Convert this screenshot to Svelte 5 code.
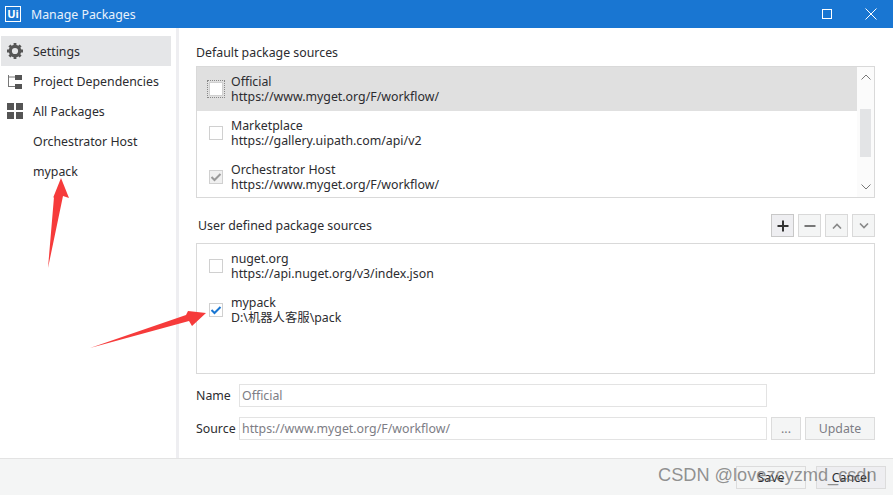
<script>
  const navItems = [
    { label: "Settings", icon: "gear", active: true },
    { label: "Project Dependencies", icon: "tree" },
    { label: "All Packages", icon: "grid" },
    { label: "Orchestrator Host" },
    { label: "mypack" }
  ];

  const defaultSources = [
    { name: "Official", url: "https://www.myget.org/F/workflow/", state: "focus", selected: true },
    { name: "Marketplace", url: "https://gallery.uipath.com/api/v2", state: "off" },
    { name: "Orchestrator Host", url: "https://www.myget.org/F/workflow/", state: "disabled" }
  ];

  const userSources = [
    { name: "nuget.org", url: "https://api.nuget.org/v3/index.json", state: "off" },
    { name: "mypack", url: "D:\\机器人客服\\pack", state: "on" }
  ];
</script>

{#snippet sourceRow(item)}
  <div class="source" class:selected={item.selected}>
    <span class="boxWrap" class:focus={item.state === "focus"}>
      <span class="box" class:on={item.state === "on"} class:disabled={item.state === "disabled"}>
        {#if item.state === "on" || item.state === "disabled"}
          <svg width="12" height="10" viewBox="0 0 12 10"><path d="M1.5 5 L4.5 8 L10.5 2" fill="none" stroke="currentColor" stroke-width="2" /></svg>
        {/if}
      </span>
    </span>
    <div class="sourceText">
      <div>{item.name}</div>
      <div>{item.url}</div>
    </div>
  </div>
{/snippet}

<div class="window">
  <header class="titleBar">
    <div class="logo">Ui</div>
    <span class="title">Manage Packages</span>
    <div class="winButtons">
      <svg width="12" height="12" viewBox="0 0 12 12"><rect x="1.5" y="1.5" width="9" height="9" fill="none" stroke="white" stroke-width="1" /></svg>
      <svg width="12" height="12" viewBox="0 0 12 12"><path d="M0.5 0.5 L11.5 11.5 M11.5 0.5 L0.5 11.5" stroke="white" stroke-width="1" /></svg>
    </div>
  </header>

  <div class="body">
    <nav class="sidebar">
      {#each navItems as item}
        <div class="navItem" class:active={item.active}>
          <span class="navIcon">
            {#if item.icon === "gear"}
              <svg width="16" height="16" viewBox="0 0 16 16">
                <circle cx="8" cy="8" r="4.7" fill="none" stroke="#555" stroke-width="3.2" />
                <path d="M8 0 V3 M8 13 V16 M0 8 H3 M13 8 H16 M2.4 2.4 L4.5 4.5 M11.5 11.5 L13.6 13.6 M13.6 2.4 L11.5 4.5 M4.5 11.5 L2.4 13.6" stroke="#555" stroke-width="2.8" />
              </svg>
            {:else if item.icon === "tree"}
              <svg width="16" height="16" viewBox="0 0 16 16">
                <path d="M1.5 2 V14 M1.5 4 H8 M1.5 13.5 H8" fill="none" stroke="#777" stroke-width="1" />
                <rect x="8" y="2" width="7" height="5" fill="#555" />
                <rect x="8" y="11" width="7" height="5" fill="#555" />
              </svg>
            {:else if item.icon === "grid"}
              <svg width="16" height="16" viewBox="0 0 16 16" fill="#555">
                <rect x="0" y="0" width="7" height="7" />
                <rect x="9" y="0" width="7" height="7" />
                <rect x="0" y="9" width="7" height="7" />
                <rect x="9" y="9" width="7" height="7" />
              </svg>
            {/if}
          </span>
          <span>{item.label}</span>
        </div>
      {/each}
    </nav>

    <main class="content">
      <div class="sectionLabel first">Default package sources</div>
      <div class="listBox defaults">
        <div class="rows">
          {#each defaultSources as item}
            {@render sourceRow(item)}
          {/each}
        </div>
        <div class="scrollBar">
          <svg width="10" height="6" viewBox="0 0 10 6"><path d="M0.5 5.5 L5 1 L9.5 5.5" fill="none" stroke="#777" /></svg>
          <div class="track"><div class="thumb"></div></div>
          <svg width="10" height="6" viewBox="0 0 10 6"><path d="M0.5 0.5 L5 5 L9.5 0.5" fill="none" stroke="#777" /></svg>
        </div>
      </div>

      <div class="userHeader">
        <div class="sectionLabel">User defined package sources</div>
        <div class="tools">
          <button class="tool hot" aria-label="Add">
            <svg width="12" height="12" viewBox="0 0 12 12"><path d="M6 0.5 V11.5 M0.5 6 H11.5" stroke="#333" stroke-width="2" /></svg>
          </button>
          <button class="tool" aria-label="Remove">
            <svg width="12" height="12" viewBox="0 0 12 12"><path d="M0.5 6 H11.5" stroke="#777" stroke-width="2" /></svg>
          </button>
          <button class="tool" aria-label="Up">
            <svg width="10" height="6" viewBox="0 0 10 6"><path d="M1 5.5 L5 1.5 L9 5.5" fill="none" stroke="#888" stroke-width="1.6" /></svg>
          </button>
          <button class="tool" aria-label="Down">
            <svg width="10" height="6" viewBox="0 0 10 6"><path d="M1 0.5 L5 4.5 L9 0.5" fill="none" stroke="#888" stroke-width="1.6" /></svg>
          </button>
        </div>
      </div>
      <div class="listBox users">
        <div class="rows">
          {#each userSources as item}
            {@render sourceRow(item)}
          {/each}
        </div>
      </div>

      <div class="formRow name">
        <span class="formLabel">Name</span>
        <div class="input">Official</div>
      </div>
      <div class="formRow">
        <span class="formLabel">Source</span>
        <div class="input">https://www.myget.org/F/workflow/</div>
        <button class="btn dots">...</button>
        <button class="btn update">Update</button>
      </div>
    </main>
  </div>

  <footer class="footer">
    <button class="btn footBtn">Save</button>
    <button class="btn footBtn cancel">Cancel</button>
  </footer>

  <svg class="arrows" width="893" height="495" viewBox="0 0 893 495">
    <polygon points="61,178 69,198 63,196 48,268 54,197 53,198" fill="#f63b3b" />
    <polygon points="206,313 192,326 189,321 90,348 186,315 188,311" fill="#f63b3b" />
  </svg>
  <div class="watermark">CSDN @lovezcyzmd_csdn</div>
</div>

<style>
  :global(body) {
    margin: 0;
    background: white;
  }

  .window {
    position: relative;
    display: flex;
    flex-direction: column;
    width: 893px;
    height: 495px;
    overflow: hidden;
    font-family: "Noto Sans", "Noto Sans CJK SC", sans-serif;
    font-size: 12.35px;
    color: #2c2c30;
    background: white;
  }

  .titleBar {
    display: flex;
    align-items: center;
    height: 28px;
    padding: 0 0 0 5px;
    background: #1976d2;
    color: white;
    flex-shrink: 0;
  }

  .logo {
    width: 14px;
    height: 14px;
    border: 1px solid white;
    font-size: 11px;
    font-weight: 700;
    line-height: 14px;
    text-align: center;
  }

  .title {
    margin-left: 10px;
    color: #e8f1fb;
  }

  .winButtons {
    display: flex;
    align-items: center;
    gap: 32px;
    margin-left: auto;
    margin-right: 16px;
  }

  .body {
    display: flex;
    flex: 1;
    min-height: 0;
  }

  .sidebar {
    width: 179px;
    box-sizing: border-box;
    padding: 8px 5px 0 1px;
    border-right: 3px solid #eeeef1;
    flex-shrink: 0;
  }

  .navItem {
    display: flex;
    align-items: center;
    height: 30px;
    width: 170px;
  }

  .navItem.active {
    background: #e5e6e8;
  }

  .navIcon {
    display: flex;
    align-items: center;
    justify-content: center;
    width: 16px;
    margin: 0 10px 0 6px;
  }

  .content {
    flex: 1;
    display: flex;
    flex-direction: column;
    padding: 0 18px 0 17px;
  }

  .sectionLabel {
    line-height: 17px;
  }

  .sectionLabel.first {
    margin-top: 16px;
    margin-bottom: 5px;
  }

  .listBox {
    display: flex;
    border: 1px solid #d9d9d9;
    box-sizing: border-box;
  }

  .defaults {
    height: 132px;
    overflow: hidden;
  }

  .users {
    height: 131px;
  }

  .rows {
    flex: 1;
  }

  .source {
    display: flex;
    align-items: center;
    height: 44px;
  }

  .source.selected {
    background: #e0e0e0;
  }

  .boxWrap {
    display: flex;
    align-items: center;
    justify-content: center;
    width: 16px;
    height: 16px;
    margin-left: 10px;
    margin-right: 6px;
    border: 1px solid transparent;
  }

  .boxWrap.focus {
    border: 1px dotted #888;
  }

  .box {
    display: flex;
    align-items: center;
    justify-content: center;
    width: 12px;
    height: 12px;
    border: 1px solid #d0d0d0;
    background: white;
    color: #1976d2;
    flex-shrink: 0;
  }

  .box.disabled {
    background: #f0f0f0;
    color: #9a9a9a;
  }

  .sourceText {
    line-height: 15px;
  }

  .scrollBar {
    display: flex;
    flex-direction: column;
    align-items: center;
    justify-content: space-between;
    width: 17px;
    padding: 7px 0;
    box-sizing: border-box;
    background: #fbfbfb;
  }

  .track {
    flex: 1;
    width: 11px;
    padding-top: 29px;
  }

  .thumb {
    height: 48px;
    background: #e3e4e6;
  }

  .userHeader {
    display: flex;
    align-items: center;
    justify-content: space-between;
    height: 23px;
    margin-top: 16px;
    margin-bottom: 6px;
    padding-left: 2px;
  }

  .tools {
    display: flex;
    gap: 4px;
  }

  .tool {
    display: flex;
    align-items: center;
    justify-content: center;
    width: 23px;
    height: 23px;
    padding: 0;
    border: 1px solid #d9d9d9;
    background: #f4f5f5;
  }

  .tool.hot {
    background: #eeeef1;
    border-color: #c8c8c8;
  }

  .formRow {
    display: flex;
    align-items: center;
    height: 23px;
    margin-top: 10px;
  }

  .formRow.name {
    width: 571px;
  }

  .formLabel {
    width: 43px;
    flex-shrink: 0;
  }

  .input {
    width: 528px;
    box-sizing: border-box;
    height: 23px;
    line-height: 21px;
    padding-left: 2px;
    border: 1px solid #e3e3e3;
    color: #7d7d85;
    flex-shrink: 0;
  }

  .btn {
    height: 23px;
    padding: 0;
    border: 1px solid #dcdcdc;
    background: #f4f5f5;
    color: #7d7d85;
    font: inherit;
  }

  .dots {
    width: 30px;
    margin-left: 4px;
  }

  .update {
    width: 70px;
    margin-left: 4px;
  }

  .footer {
    display: flex;
    justify-content: flex-end;
    align-items: center;
    gap: 10px;
    height: 37px;
    box-sizing: border-box;
    padding-right: 7px;
    background: #f4f5f5;
    border-top: 1px solid #e3e3e3;
    flex-shrink: 0;
  }

  .footBtn {
    width: 70px;
    color: #2c2c30;
  }

  .cancel {
    background: #eeeef1;
  }

  .arrows {
    position: absolute;
    top: 0;
    left: 0;
    pointer-events: none;
  }

  .watermark {
    position: absolute;
    top: 465px;
    left: 658px;
    font-family: "Liberation Sans", sans-serif;
    font-size: 18.2px;
    color: rgba(100, 100, 100, 0.7);
    white-space: nowrap;
  }
</style>
